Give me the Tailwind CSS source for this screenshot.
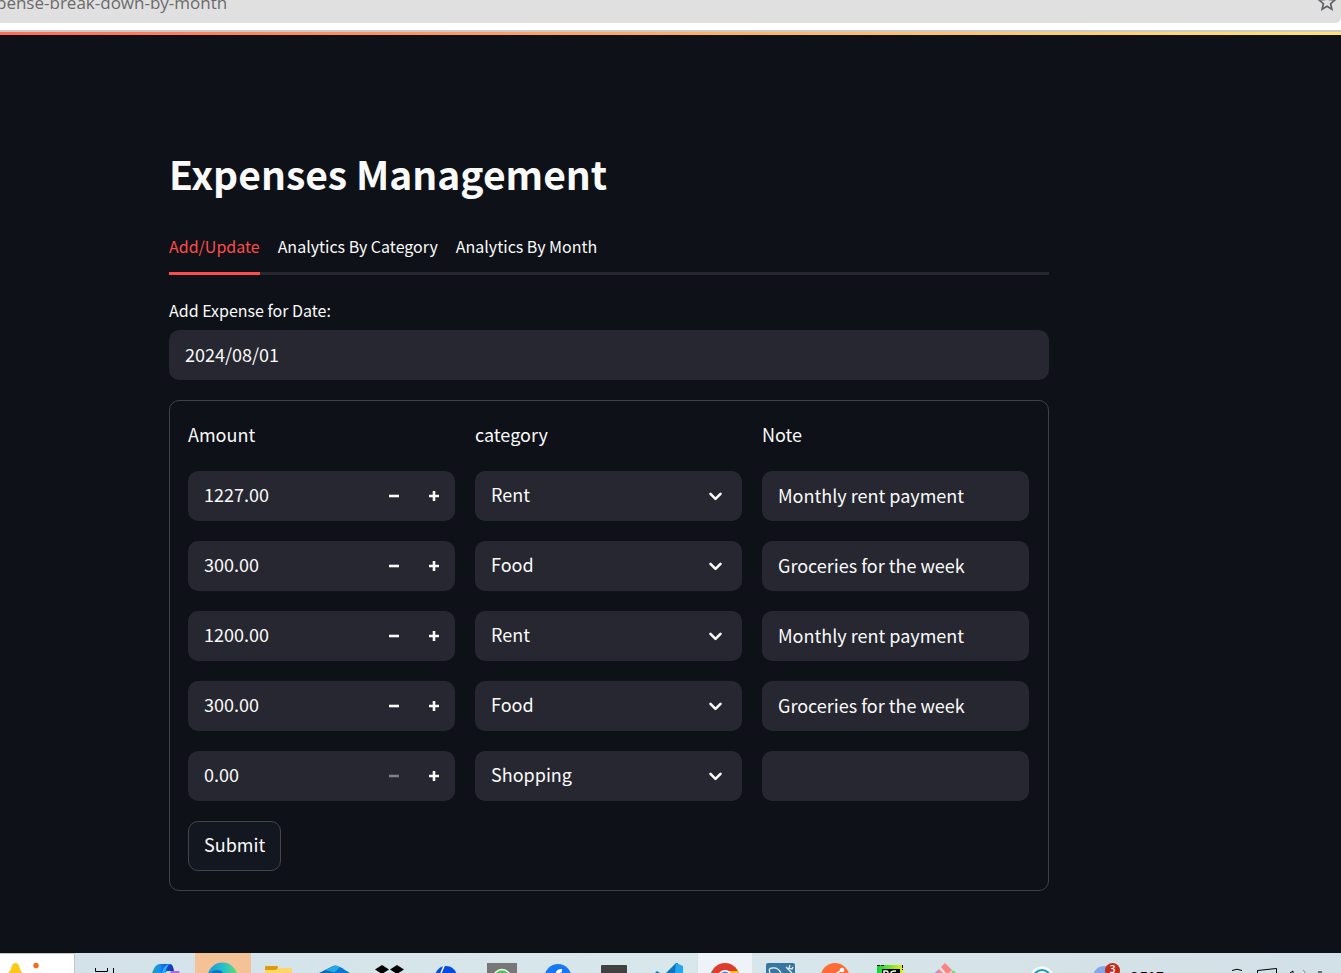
<!DOCTYPE html>
<html lang="en">
<head>
<meta charset="utf-8">
<title>Expenses Management</title>
<script src="https://cdn.jsdelivr.net/npm/@tailwindcss/browser@4"></script>
</head>
<body class="flex h-screen flex-col overflow-hidden bg-[#0e1117] font-['Noto_Sans_CJK_SC',sans-serif] text-[18px] text-[#fafafa]">

<!-- Browser address bar -->
<div class="shrink-0 bg-white pb-[7px]">
  <header class="flex h-[23px] items-start justify-between overflow-hidden rounded-br-md bg-[#e0e0e0]">
    <input aria-label="Address" value="pense-break-down-by-month" class="-mt-[9px] -ml-1 h-6 w-80 bg-transparent font-['Open_Sans',sans-serif] text-[17px] text-[#6b6b6b] outline-none">
    <button aria-label="Bookmark this tab" class="-mt-2 mr-1">
      <svg class="block" width="20" height="20" viewBox="0 0 20 20" fill="none" stroke="#5f6368" stroke-width="1.7"><path d="M10 2.200l2.200 5.300 5.700.5-4.300 3.700 1.300 5.600-4.900-3-4.900 3 1.300-5.600L2.100 8l5.700-.5z"/></svg>
    </button>
  </header>
</div>
<div class="h-[2px] shrink-0 bg-[#cbcbcb]"></div>
<div class="h-[3px] shrink-0 bg-linear-to-r from-[#ff6b57] to-[#ffe473]"></div>

<main class="min-h-0 flex-1 overflow-hidden pt-[106px] pr-[292px] pl-[169px]">
  <h1 class="text-[39px] leading-[64px] font-bold">Expenses Management</h1>
  <nav class="mt-4 flex gap-[18px] border-b-3 border-[#262730] text-[16px] leading-[50px]" role="tablist">
    <button role="tab" aria-selected="true" class="-mb-[3px] border-b-3 border-[#ff4b4b] pb-px text-[#ff4b4b]">Add/Update</button>
    <button role="tab" aria-selected="false" class="pb-px">Analytics By Category</button>
    <button role="tab" aria-selected="false" class="pb-px">Analytics By Month</button>
  </nav>
  <label for="date" class="mt-5 block pb-[5px] text-[16px] leading-[30px]">Add Expense for Date:</label>
  <input id="date" value="2024/08/01" class="block h-[50px] w-full rounded-[10px] bg-[#262730] px-4 pb-[3px] outline-none">

  <form class="mt-5 rounded-[10px] border border-[#3e4146] py-[19px] pr-[19px] pl-[18px]">
    <div id="rows" class="grid grid-cols-3 gap-5">
      <p class="h-[31px] leading-[28px]">Amount</p>
      <p class="h-[31px] leading-[28px]">category</p>
      <p class="h-[31px] leading-[28px]">Note</p>
    </div>
    <button type="button" class="mt-5 h-[50px] rounded-[10px] border border-[#42454b] bg-[#131720] px-[15px] pb-[3px]">Submit</button>
  </form>
</main>

<!-- Desktop taskbar, cut off by the screen edge -->
<footer class="flex h-5 shrink-0 overflow-hidden bg-linear-to-r from-[#d3e2e9] via-[#d8e7eb] to-[#d2e0e7]">
  <div class="w-[75px] shrink-0 border-t border-r border-[#c4c4c4] bg-white">
    <svg width="74" height="20" viewBox="0 1 74 20"><path d="M7 21q4-3 4.500-7 1-4 4-4t4 4q.5 4 4 7z" fill="#fdc916"/><circle cx="36" cy="12.500" r="2.700" fill="#f8691e"/></svg>
  </div>
  <svg class="shrink-0" width="64" height="20" viewBox="75 0 64 20" fill="none" stroke="#000"><path d="M95.500 15v3.500h12V15M113.500 15v5"/></svg>
  <div class="grid w-[838px] shrink-0 grid-cols-15">
    <svg width="56" height="20" viewBox="0 0 56 20"><defs><linearGradient id="cp"><stop stop-color="#25a5a0"/><stop offset=".35" stop-color="#168ff0"/><stop offset=".7" stop-color="#1744d8"/><stop offset="1" stop-color="#123a9e"/></linearGradient></defs><path d="M13 20q3-9 8-9h10q3 0 4 7h-7l-2 2z" fill="url(#cp)"/><path d="M26 20q2-8 5-9-6 0-8 9z" fill="#28b4ff"/><path d="M31 20l1-2h8l1 2z" fill="#b565ec"/></svg>
    <svg class="bg-[#f5c196]" width="56" height="20" viewBox="0 0 56 20"><defs><linearGradient id="ed"><stop stop-color="#1a96d8"/><stop offset=".55" stop-color="#29c0cc"/><stop offset="1" stop-color="#62df70"/></linearGradient></defs><circle cx="27.500" cy="24.500" r="15" fill="url(#ed)"/><path d="M13 22q6-7 13-4l3 3H13z" fill="#0c73c2"/></svg>
    <svg width="56" height="20" viewBox="0 0 56 20"><path d="M14 20v-6q0-1 1-1h11l1 2h13q1 0 1 1v4z" fill="#ffd669"/><path d="M14 17v-3q0-1 1-1h11q1 0 1 2l-2 2z" fill="#dc9b08"/></svg>
    <svg width="56" height="20" viewBox="0 0 56 20"><path d="M12 20l14-7q2-1 4 0l12 7z" fill="#0a69b8"/><path d="M18 17l9-4q2-1 4 0l6 3-8 4z" fill="#25a8e7"/><path d="M33 14l10 6H27z" fill="#0879d0"/></svg>
    <svg width="56" height="20" viewBox="0 0 56 20"><path d="M20 12l7 4.500-7 4.500-7-4.500zM35 12l7 4.500-7 4.500-7-4.500z"/></svg>
    <svg width="56" height="20" viewBox="0 0 56 20"><circle cx="28" cy="24" r="11" fill="#074ade"/><path d="M26 13l-3 7" stroke="#fff" stroke-width="1.500"/></svg>
    <svg width="56" height="20" viewBox="0 0 56 20"><path d="M13 10h30v10H13z" fill="#777"/><circle cx="28" cy="25" r="8.500" fill="#4bc758" stroke="#fff" stroke-width="1.500"/></svg>
    <svg width="56" height="20" viewBox="0 0 56 20"><circle cx="28" cy="24.500" r="13.500" fill="#1877f2"/><path d="M26 20q0-4 6-4v3l-2 1z" fill="#fff"/></svg>
    <svg width="56" height="20" viewBox="0 0 56 20"><path d="M15 20v-7q0-1 1-1h24q1 0 1 1v7z" fill="#414141"/></svg>
    <svg width="56" height="20" viewBox="0 0 56 20"><path d="M24 20L34 10l2 0v10z" fill="#0978be"/><path d="M34 10l7 3v7h-8z" fill="#25a7ef"/><path d="M13 20l2-2 3 2z" fill="#0978be"/></svg>
    <svg class="bg-[#edf3f6]" width="54" height="20" viewBox="0 0 54 20"><circle cx="27" cy="24.500" r="14.500" fill="#df3b2f"/><path d="M27 18h13l2 4H27z" fill="#fbc116"/><path d="M14 18l3 4h-5z" fill="#269b45"/><circle cx="27" cy="24.500" r="7.500" fill="#fff"/><circle cx="27" cy="24.500" r="6" fill="#4285f4"/></svg>
    <svg width="56" height="20" viewBox="0 0 56 20"><rect x="12" y="10" width="29" height="20" rx="2" fill="#3876a2"/><path d="M16 20q-2-5 2-5 6-1 9 5M32 14l6 6M36 12l-1 3 3 1 1-2" stroke="#e5f1f7" stroke-width="1.300" fill="none"/></svg>
    <svg width="56" height="20" viewBox="0 0 56 20"><circle cx="26" cy="24.500" r="14.500" fill="#ff6c37"/><circle cx="33" cy="17" r="2.300" fill="#fff"/><path d="M31 18l-4 3" stroke="#fff" stroke-width="1.500"/></svg>
    <svg width="56" height="20" viewBox="0 0 56 20"><defs><linearGradient id="pc"><stop stop-color="#0bd43b"/><stop offset="1" stop-color="#ecec16"/></linearGradient></defs><path d="M12 12h26v8H12z" fill="url(#pc)"/><path d="M12 12.500h8M37.500 12v5" stroke="#000" stroke-dasharray="3 1"/><path d="M17 16h18v4H17z"/><path d="M19 20v-2h3q1 0 1 2M26 20q0-2 4-2h1" stroke="#fff" stroke-width="1.500" fill="none"/></svg>
    <svg width="56" height="20" viewBox="0 0 56 20"><path d="M24 10l7 7-3 3h-3l-5-6z" fill="#fb8383"/><path d="M18 16l4 4h-8z" fill="#fb8383"/><path d="M32 17l3 3h-5z" fill="#80d66a"/><path d="M16 18l2 2h-4z" fill="#78a9e8"/></svg>
  </div>
  <div class="ml-auto flex shrink-0">
    <svg width="60" height="20" viewBox="1020 0 60 20"><circle cx="1042" cy="25.500" r="12" fill="#fff"/><circle cx="1042" cy="25.500" r="8.500" fill="#fff" stroke="#1698cf" stroke-width="2.200"/></svg>
    <svg width="50" height="20" viewBox="1080 0 50 20"><circle cx="1104" cy="24" r="11" fill="#82a9ea"/><circle cx="1112.500" cy="17.500" r="7.500" fill="#c42b1c"/><text x="1112.500" y="20" fill="#fff" font-family="Open Sans" font-size="10" font-weight="600" text-anchor="middle">3</text></svg>
    <span class="mt-[13px] w-[96px] font-['Open_Sans',sans-serif] text-[16px] text-black">25°F</span>
    <svg width="115" height="20" viewBox="1226 0 115 20" fill="none" stroke="#000"><path d="M1232 17.500q5-2.500 10 0M1257.500 20v-2.500l19-2v4.500M1290 20l3-2v2M1319 18v2M1321 18v2"/><path d="M1303 17q2 1 2 3" stroke="#888"/></svg>
  </div>
</footer>

<script>
const entries = [
  ['1227.00', 'Rent', 'Monthly rent payment'],
  ['300.00', 'Food', 'Groceries for the week'],
  ['1200.00', 'Rent', 'Monthly rent payment'],
  ['300.00', 'Food', 'Groceries for the week'],
  ['0.00', 'Shopping', ''],
];
const options = ['Rent', 'Food', 'Shopping'];
document.getElementById('rows').insertAdjacentHTML('beforeend', entries.map(([amount, category, note], i) => `
  <div class="flex h-[50px] min-w-0 rounded-[10px] bg-[#262730] pr-[1px]">
    <input aria-label="Amount ${i + 1}" inputmode="decimal" value="${amount}" class="min-w-0 flex-1 bg-transparent pb-[3px] pl-4 outline-none">
    <button type="button" aria-label="Decrease amount ${i + 1}" ${amount === '0.00' ? 'disabled' : ''} class="flex w-10 items-center justify-center text-[#fafafa] disabled:text-[#7d808a]">
      <svg width="10" height="10" viewBox="0 0 10 10"><path d="M0 3.700h10v2.600H0z" fill="currentColor"/></svg>
    </button>
    <button type="button" aria-label="Increase amount ${i + 1}" class="flex w-10 items-center justify-center">
      <svg width="10" height="10" viewBox="0 0 10 10"><path d="M3.700 0h2.600v3.700H10v2.600H6.300V10H3.700V6.300H0V3.700h3.700z" fill="currentColor"/></svg>
    </button>
  </div>
  <div class="grid min-w-0 items-center">
    <select aria-label="Category ${i + 1}" class="col-start-1 row-start-1 h-[50px] w-full appearance-none rounded-[10px] bg-[#262730] px-4 pb-[3px] outline-none">
      ${options.map(o => `<option${o === category ? ' selected' : ''}>${o}</option>`).join('')}
    </select>
    <svg class="pointer-events-none col-start-1 row-start-1 mr-5 justify-self-end" width="13" height="9" viewBox="0 0 13 9" fill="none" stroke="#fafafa" stroke-width="2.600" stroke-linecap="round" stroke-linejoin="round"><path d="M1.500 1.800l5 5 5-5"/></svg>
  </div>
  <input aria-label="Note ${i + 1}" value="${note}" class="h-[50px] w-full min-w-0 rounded-[10px] bg-[#262730] px-4 pb-[3px] outline-none">`).join(''));
</script>
</body>
</html>
